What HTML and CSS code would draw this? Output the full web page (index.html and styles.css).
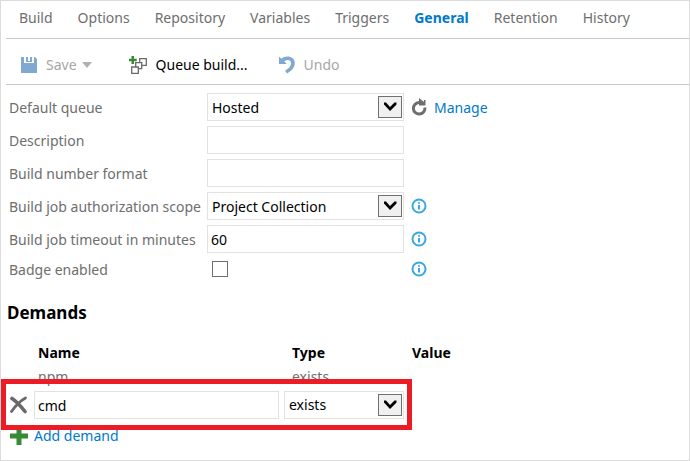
FILE: index.html
```html
<!DOCTYPE html>
<html lang="en">
<head>
<meta charset="utf-8">
<title>Build definition - General</title>
<link rel="stylesheet" href="styles.css">
</head>
<body>
<main class="panel">
  <nav class="tabs">
    <a href="#build">Build</a>
    <a href="#options">Options</a>
    <a href="#repository">Repository</a>
    <a href="#variables">Variables</a>
    <a href="#triggers">Triggers</a>
    <a href="#general" class="active">General</a>
    <a href="#retention">Retention</a>
    <a href="#history">History</a>
  </nav>
  <div class="toolbar">
    <button type="button" class="tool save" disabled>
      <svg width="16" height="16" viewBox="0 0 16 16"><path fill="#7fa9d0" d="M0 0H3V6H13V0H14L16 2V16H0ZM5 0H7V4H9V0H11V5H5Z"/></svg>
      <span>Save</span>
      <svg class="caret" width="10" height="6" viewBox="0 0 10 6"><path fill="#b0b0b0" d="M0 0H10L5 6Z"/></svg>
    </button>
    <button type="button" class="tool queue">
      <svg width="18" height="18" viewBox="0 0 18 18"><g fill="#fff" stroke="#6b6b6b" stroke-width="1.3"><path d="M10.7 2.7H17.3V9.3H10.7Z"/><path d="M6.7 6.7H12.7V12.7H6.7Z"/><path d="M2.7 11H9.3V17.3H2.7Z"/></g><path fill="#388a34" d="M2.5 0H5V2.7H7.7V5.2H5V8H2.5V5.2H0V2.7H2.5Z"/></svg>
      <span>Queue build...</span>
    </button>
    <button type="button" class="tool undo" disabled>
      <svg width="16" height="18" viewBox="0 0 16 18"><path fill="#7fa9d0" d="M0 .5L2.4 2.8C7 -1.5 15.8 .3 15.8 7C15.8 12 12 15 8 17.5L6 14.8C9.5 12.6 12 10.5 12 7.3C12 3.8 8 3 5.3 5.6L7.8 8H0Z"/></svg>
      <span>Undo</span>
    </button>
  </div>

  <form class="settings">
    <label for="queue">Default queue</label>
    <div class="select">
      <select id="queue"><option>Hosted</option></select>
      <svg class="arrow" viewBox="0 0 22 20"><path fill="#000" d="M5 5.5H7L11 10L15.5 5.5H17.5V7.5L11 14L5 7.5Z"/></svg>
    </div>
    <div class="extra">
      <svg width="16" height="18" viewBox="0 0 16 18"><path fill="none" stroke="#6e6e6e" stroke-width="3" d="M8.6 4.5H8A5.8 5.8 0 1 0 13.9 9.5"/><path fill="#6e6e6e" d="M8 0L13 4V2H14.5V7.5H8Z"/></svg>
      <a href="#manage">Manage</a>
    </div>

    <label for="description">Description</label>
    <input id="description" type="text">
    <span></span>

    <label for="format">Build number format</label>
    <input id="format" type="text">
    <span></span>

    <label for="scope">Build job authorization scope</label>
    <div class="select">
      <select id="scope"><option>Project Collection</option></select>
      <svg class="arrow" viewBox="0 0 22 20"><path fill="#000" d="M5 5.5H7L11 10L15.5 5.5H17.5V7.5L11 14L5 7.5Z"/></svg>
    </div>
    <div class="extra"><svg class="info" width="16" height="16" viewBox="0 0 16 16"><circle cx="8" cy="8" r="6.5"/><path d="M8 7V11.5M8 4.3V5.8"/></svg></div>

    <label for="timeout">Build job timeout in minutes</label>
    <input id="timeout" type="text" value="60">
    <div class="extra"><svg class="info" width="16" height="16" viewBox="0 0 16 16"><circle cx="8" cy="8" r="6.5"/><path d="M8 7V11.5M8 4.3V5.8"/></svg></div>

    <label for="badge">Badge enabled</label>
    <input id="badge" type="checkbox">
    <div class="extra"><svg class="info" width="16" height="16" viewBox="0 0 16 16"><circle cx="8" cy="8" r="6.5"/><path d="M8 7V11.5M8 4.3V5.8"/></svg></div>
  </form>

  <section class="demands">
    <h2>Demands</h2>
    <table>
      <colgroup><col class="c-icon"><col class="c-name"><col class="c-type"><col></colgroup>
      <thead>
        <tr><th></th><th>Name</th><th class="type">Type</th><th>Value</th></tr>
      </thead>
      <tbody>
        <tr class="fixed"><td></td><td>npm</td><td class="type">exists</td><td></td></tr>
        <tr class="editing">
          <td>
            <button type="button" class="remove" aria-label="Remove demand"><svg width="19" height="18" viewBox="0 0 19 18"><path fill="none" stroke="#696969" stroke-width="3.6" stroke-linecap="round" d="M3 2.5C7 5 12 10.5 16 15.5"/><path fill="none" stroke="#696969" stroke-width="2.8" stroke-linecap="round" d="M16.5 2C11 5 6 10.5 2.5 15.5"/></svg></button>
          </td>
          <td><input type="text" value="cmd" aria-label="Name"></td>
          <td>
            <div class="select">
              <select aria-label="Type"><option>exists</option></select>
              <svg class="arrow" viewBox="0 0 22 20"><path fill="#000" d="M5 5.5H7L11 10L15.5 5.5H17.5V7.5L11 14L5 7.5Z"/></svg>
            </div>
          </td>
          <td></td>
        </tr>
      </tbody>
    </table>
    <a href="#add" class="add">
      <svg width="18" height="18" viewBox="0 0 18 18"><path fill="#388a34" d="M6.5 0H11.5V6.5H18V11.5H11.5V18H6.5V11.5H0V6.5H6.5Z"/></svg>
      <span>Add demand</span>
    </a>
    <div class="highlight"></div>
  </section>
</main>
</body>
</html>
```
FILE: styles.css
```css
* { box-sizing: border-box; }

body {
  margin: 0;
  background: #fff;
  color: #6e6e6e;
  font-family: "Noto Sans", "Open Sans", sans-serif;
  font-size: 14px;
  line-height: 20px;
}

a { color: #007acc; text-decoration: none; }
svg { display: block; flex: none; }
input, select, button { font: inherit; color: #000; }

.panel {
  min-height: 100vh;
  padding-left: 5px;
  border: 1px solid #dcdcdc;
}

.tabs {
  display: flex;
  gap: 25px;
  height: 38px;
  padding: 7px 13px 0;
  border-bottom: 1px solid #c8c8c8;
}
.tabs a { color: #6e6e6e; }
.tabs .active { color: #007acc; font-weight: bold; }

.toolbar {
  display: flex;
  align-items: center;
  gap: 37px;
  height: 46px;
  padding: 6px 15px 0;
  border-bottom: 1px solid #c8c8c8;
}
.tool {
  display: flex;
  align-items: center;
  gap: 9px;
  padding: 0;
  border: 0;
  background: none;
}
.tool:disabled { color: #a6a6a6; }
.save .caret { margin-left: -4px; }
.undo { margin-left: -6px; }

.settings {
  display: grid;
  grid-template-columns: 198px 197px 1fr;
  grid-template-rows: repeat(5, 28px) 22px;
  row-gap: 5px;
  align-items: center;
  padding: 8px 3px 0;
}
.settings label { padding-top: 2px; }

input[type="text"], .select select {
  display: block;
  width: 100%;
  height: 28px;
  padding: 1px 3px 0;
  border: 1px solid #e2e2e2;
  border-radius: 0;
  background: #fff;
}
.select { position: relative; }
.select select { appearance: none; padding: 1px 4px 0; }
.arrow {
  position: absolute;
  top: 3px;
  right: 2px;
  width: 24px;
  height: 22px;
  border: 1px solid #707070;
  background: #f0f0f0;
  pointer-events: none;
}
input[type="checkbox"] {
  appearance: none;
  width: 16px;
  height: 16px;
  margin: 0 5px;
  border: 1px solid #6e6e6e;
  background: #fff;
}
.extra {
  display: flex;
  align-items: center;
  gap: 7px;
  padding-left: 7px;
}
.extra a { padding-top: 2px; }
.info { fill: none; stroke: #3aa9e0; stroke-width: 2; }

.demands {
  position: relative;
  padding-left: 1px;
}
h2 {
  margin: 0;
  padding-top: 20px;
  color: #000;
  font-size: 17px;
  line-height: 26px;
}
table {
  width: 100%;
  margin-top: 14px;
  border-collapse: collapse;
  table-layout: fixed;
}
.c-icon { width: 27px; }
.c-name { width: 250px; }
.c-type { width: 124px; }
th, td { padding: 0 4px; text-align: left; }
th { height: 26px; color: #000; }
.type { padding-left: 8px; }
.fixed td { height: 22px; }
.editing td { height: 33px; padding: 0; }
.editing td:nth-child(2) { padding-right: 5px; }
.editing td:nth-child(3) { padding-right: 4px; }
.remove { display: block; padding: 0 2px; border: 0; background: none; }
.add {
  display: inline-flex;
  align-items: center;
  gap: 6px;
  padding: 5px 3px;
}
.highlight {
  position: absolute;
  left: -5px;
  top: 99px;
  width: 411px;
  height: 51px;
  border: 5px solid #ed1c24;
  pointer-events: none;
}
```
